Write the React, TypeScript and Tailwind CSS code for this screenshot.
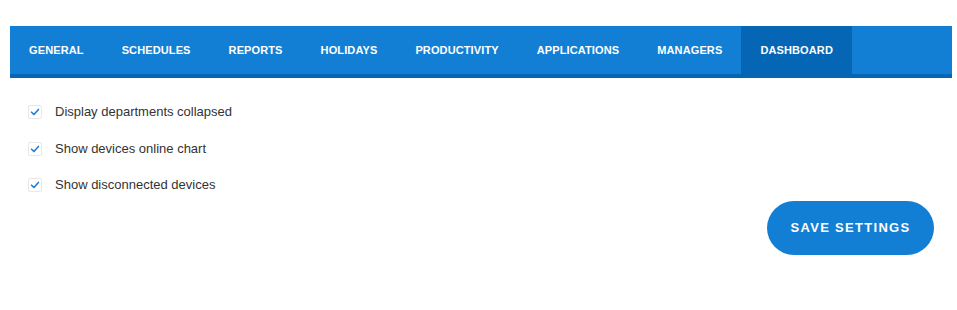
import React from 'react';

const tabs = ['General', 'Schedules', 'Reports', 'Holidays', 'Productivity', 'Applications', 'Managers', 'Dashboard'];

const options = ['Display departments collapsed', 'Show devices online chart', 'Show disconnected devices'];

const CheckMark = () => (
  <svg viewBox="0 0 14 14" className="w-[14px] h-[14px]">
    <path d="M3 7.2 L5.8 10 L11 4" fill="none" stroke="#1a7fd4" strokeWidth="1.8" strokeLinecap="round" strokeLinejoin="round" />
  </svg>
);

const App: React.FC = () => {
  return (
    <div className="w-[957px] h-[310px] bg-white pt-[26px] px-[10px]" style={{ fontFamily: '"Liberation Sans", Arial, sans-serif' }}>
      {/* Tabs */}
      <nav className="flex bg-[#127fd4] border-b-4 border-[#0466b4] w-[942px]">
        {tabs.map((tab) => (
          <div
            key={tab}
            className={`h-[48px] px-[19px] flex items-center text-[11px] font-bold uppercase tracking-[0.12px] text-white ${
              tab === 'Dashboard' ? 'bg-[#0466b4]' : ''
            }`}
          >
            {tab}
          </div>
        ))}
      </nav>

      {/* Options */}
      <div className="flex flex-col gap-[20.5px] pl-[18px] pt-[26px]">
        {options.map((opt) => (
          <label key={opt} className="flex items-center gap-[13px] text-[13px] text-[#333] leading-[16px]">
            <span className="w-[14px] h-[14px] border border-[#e8e8e8] rounded-[2px] flex items-center justify-center">
              <CheckMark />
            </span>
            {opt}
          </label>
        ))}
      </div>

      {/* Save */}
      <div className="flex justify-end pr-[13px] mt-[8px]">
        <button className="w-[167px] h-[54px] rounded-full bg-[#127fd4] text-white text-[13px] font-bold uppercase tracking-[1.3px]">
          Save Settings
        </button>
      </div>
    </div>
  );
};

export default App;
